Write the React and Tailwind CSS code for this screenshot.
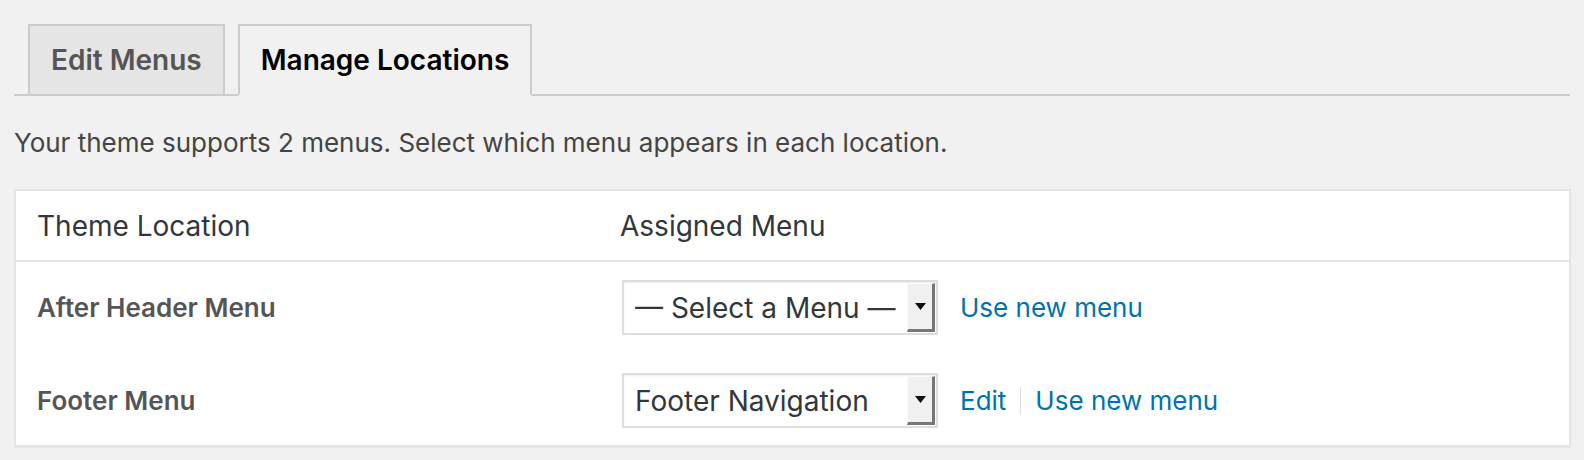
import React from "react";

function Select({ value }) {
  return (
    <div className="relative flex h-[55px] w-[316px] items-stretch border-2 border-[#dddddd] bg-white shadow-[inset_0_1px_2px_rgba(0,0,0,0.07)]">
      <div className="flex flex-1 items-center whitespace-nowrap pl-[11px] text-[28px] leading-none text-[#32373c]">{value}</div>
      <div className="my-[1px] mr-[1px] flex w-[28px] items-center justify-center border-b-[3px] border-r-[3px] border-l border-t border-b-[#777777] border-r-[#777777] border-l-[#fafafa] border-t-[#fafafa] bg-[#f0f0f0]">
        <svg width="11" height="7" viewBox="0 0 11 7">
          <path d="M0 0 L11 0 L5.5 7 Z" fill="#111" />
        </svg>
      </div>
    </div>
  );
}

export default function App() {
  return (
    <div className="h-[460px] w-full bg-[#f1f1f1] px-[14px] pt-[24px] font-['Inter','Liberation_Sans',sans-serif]">
      <div className="flex items-end gap-[13px] border-b-2 border-[#cccccc] pl-[14px]">
        <div className="-mb-[2px] flex h-[72px] items-center border-2 border-[#cccccc] bg-[#e5e5e5] px-[21px] text-[28px] font-semibold leading-none text-[#555555]">
          Edit Menus
        </div>
        <div className="-mb-[2px] flex h-[72px] items-center border-2 border-[#cccccc] border-b-[#f1f1f1] bg-[#f1f1f1] px-[21px] text-[28px] font-semibold leading-none text-black">
          Manage Locations
        </div>
      </div>
      <p className="mt-[33px] text-[26px] leading-[28px] text-[#444444]">
        Your theme supports 2 menus. Select which menu appears in each location.
      </p>
      <div className="mt-[32px] w-[1557px] border-2 border-[#e5e5e5] bg-white shadow-[0_1px_1px_rgba(0,0,0,0.04)]">
        <div className="grid h-[71px] grid-cols-[583px_1fr] items-center border-b-2 border-[#e5e5e5] text-[28px] leading-none text-[#32373c]">
          <div className="px-[21px]">Theme Location</div>
          <div className="px-[21px]">Assigned Menu</div>
        </div>
        <div className="grid grid-cols-[583px_1fr] pb-[17px] pt-[18px]">
          <div className="flex h-[55px] items-center px-[21px] text-[26px] font-semibold leading-none text-[#555555]">
            After Header Menu
          </div>
          <div className="flex items-center gap-[22px] px-[23px]">
            <Select value="— Select a Menu —" />
            <a className="text-[26px] leading-none text-[#0073aa]">Use new menu</a>
          </div>
          <div className="mt-[38px] flex h-[55px] items-center px-[21px] text-[26px] font-semibold leading-none text-[#555555]">
            Footer Menu
          </div>
          <div className="mt-[38px] flex items-center gap-[22px] px-[23px]">
            <Select value="Footer Navigation" />
            <div className="flex items-center text-[26px] leading-none text-[#0073aa]">
              <a>Edit</a>
              <span className="mx-[14px] h-[28px] w-px bg-[#dddddd]" />
              <a>Use new menu</a>
            </div>
          </div>
        </div>
      </div>
    </div>
  );
}
